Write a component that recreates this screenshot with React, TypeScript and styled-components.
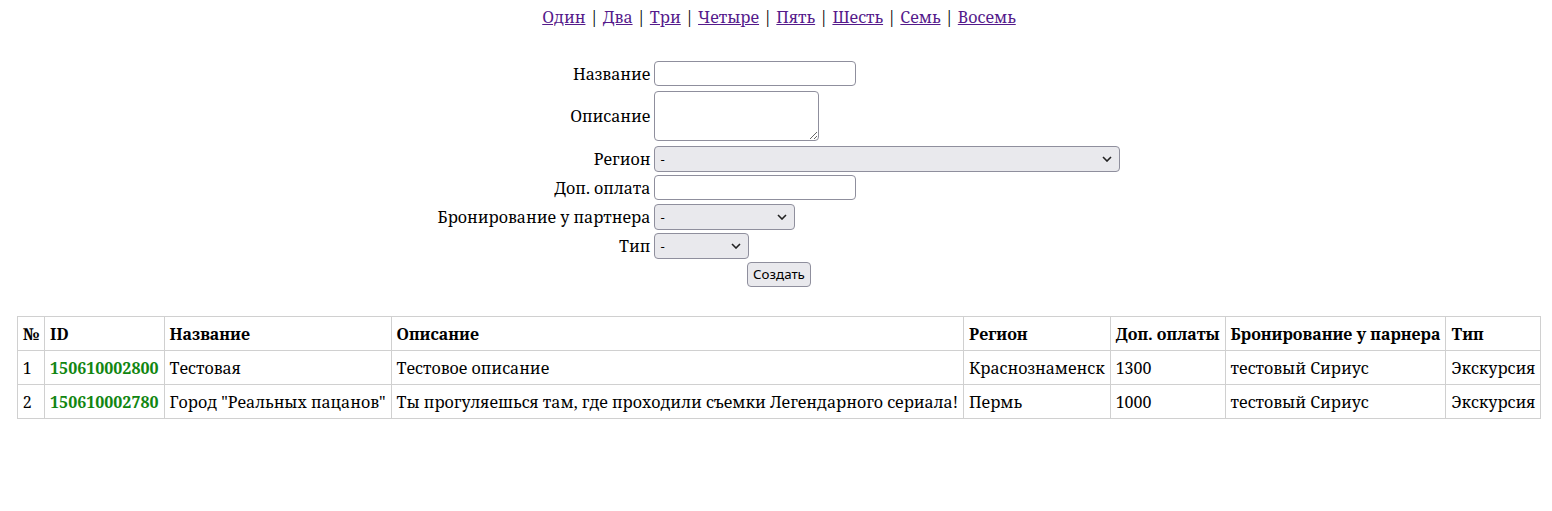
import React from "react";
import styled, { createGlobalStyle } from "styled-components";

const Global = createGlobalStyle`
  body {
    margin: 8px 2px 8px 8px;
    font-family: "Noto Serif", serif;
    font-size: 16px;
    color: #000;
    background: #fff;
  }
`;

const Nav = styled.div`
  text-align: center;
  line-height: 18px;
  white-space: pre;
`;

const NavLink = styled.a`
  color: #551a8b;
  text-decoration: underline;
`;

const Sep = styled.span`
  color: #000;
`;

const Form = styled.form`
  display: grid;
  grid-template-columns: auto auto;
  justify-content: center;
  align-items: center;
  column-gap: 4px;
  row-gap: 3px;
  margin-top: 35px;
`;

const Label = styled.label<{ $mt?: number }>`
  text-align: right;
  line-height: 22px;
  margin-top: ${(p) => p.$mt ?? 0}px;
`;

const Control = styled.div<{ $mt?: number }>`
  display: flex;
  margin-top: ${(p) => p.$mt ?? 0}px;
`;

const fieldBase = `
  box-sizing: border-box;
  border: 1px solid #8f8f9d;
  border-radius: 4px;
  font-family: "Noto Sans", sans-serif;
  font-size: 13.33px;
  color: #000;
  outline: none;
`;

const TextInput = styled.input`
  ${fieldBase}
  width: 202px;
  height: 25px;
  background: #fff;
  padding: 2px 4px;
`;

const Area = styled.textarea`
  ${fieldBase}
  width: 165px;
  height: 50px;
  background: #fff;
  padding: 2px 4px;
  resize: both;
`;

const Select = styled.select<{ $w: number }>`
  ${fieldBase}
  appearance: none;
  width: ${(p) => p.$w}px;
  height: 26px;
  padding: 0 24px 0 5px;
  background-color: #e9e9ed;
  background-image: url("data:image/svg+xml;utf8,<svg xmlns='http://www.w3.org/2000/svg' width='10' height='6' viewBox='0 0 10 6'><path d='M1 1l4 4 4-4' fill='none' stroke='%23222' stroke-width='1.6'/></svg>");
  background-repeat: no-repeat;
  background-position: right 7px center;
`;

const ButtonRow = styled.div`
  grid-column: 1 / span 2;
  display: flex;
  justify-content: center;
`;

const Button = styled.button`
  ${fieldBase}
  height: 25px;
  padding: 0 5px;
  background: #e9e9ed;
  line-height: 1;
`;

const DataTable = styled.table`
  margin: 29px auto 0;
  border-collapse: collapse;
  white-space: nowrap;
`;

const Th = styled.th`
  border: 1px solid #d0d0d0;
  padding: 6px 5px 5px;
  line-height: 22px;
  text-align: left;
`;

const Td = styled.td<{ $id?: boolean }>`
  border: 1px solid #d0d0d0;
  padding: 6px 5px 5px;
  line-height: 22px;
  color: ${(p) => (p.$id ? "#118611" : "#000")};
  font-weight: ${(p) => (p.$id ? "bold" : "normal")};
`;

const links = ["Один", "Два", "Три", "Четыре", "Пять", "Шесть", "Семь", "Восемь"];

const headers = ["№", "ID", "Название", "Описание", "Регион", "Доп. оплаты", "Бронирование у парнера", "Тип"];

const rows = [
  ["1", "150610002800", "Тестовая", "Тестовое описание", "Краснознаменск", "1300", "тестовый Сириус", "Экскурсия"],
  [
    "2",
    "150610002780",
    'Город "Реальных пацанов"',
    "Ты прогуляешься там, где проходили съемки Легендарного сериала!",
    "Пермь",
    "1000",
    "тестовый Сириус",
    "Экскурсия",
  ],
];

export default function App() {
  return (
    <>
      <Global />
      <Nav>
        {links.map((l, i) => (
          <React.Fragment key={l}>
            {i > 0 && <Sep>{" | "}</Sep>}
            <NavLink href="#">{l}</NavLink>
          </React.Fragment>
        ))}
      </Nav>
      <Form onSubmit={(e) => e.preventDefault()}>
        <Label>Название</Label>
        <Control><TextInput /></Control>
        <Label $mt={2}>Описание</Label>
        <Control $mt={2}><Area /></Control>
        <Label $mt={2}>Регион</Label>
        <Control $mt={2}><Select $w={466}><option>-</option></Select></Control>
        <Label>Доп. оплата</Label>
        <Control><TextInput /></Control>
        <Label $mt={1}>Бронирование у партнера</Label>
        <Control $mt={1}><Select $w={141}><option>-</option></Select></Control>
        <Label>Тип</Label>
        <Control><Select $w={95}><option>-</option></Select></Control>
        <ButtonRow><Button type="submit">Создать</Button></ButtonRow>
      </Form>
      <DataTable>
        <thead>
          <tr>
            {headers.map((h) => (
              <Th key={h}>{h}</Th>
            ))}
          </tr>
        </thead>
        <tbody>
          {rows.map((r) => (
            <tr key={r[0]}>
              {r.map((c, i) => (
                <Td key={i} $id={i === 1}>{c}</Td>
              ))}
            </tr>
          ))}
        </tbody>
      </DataTable>
    </>
  );
}
